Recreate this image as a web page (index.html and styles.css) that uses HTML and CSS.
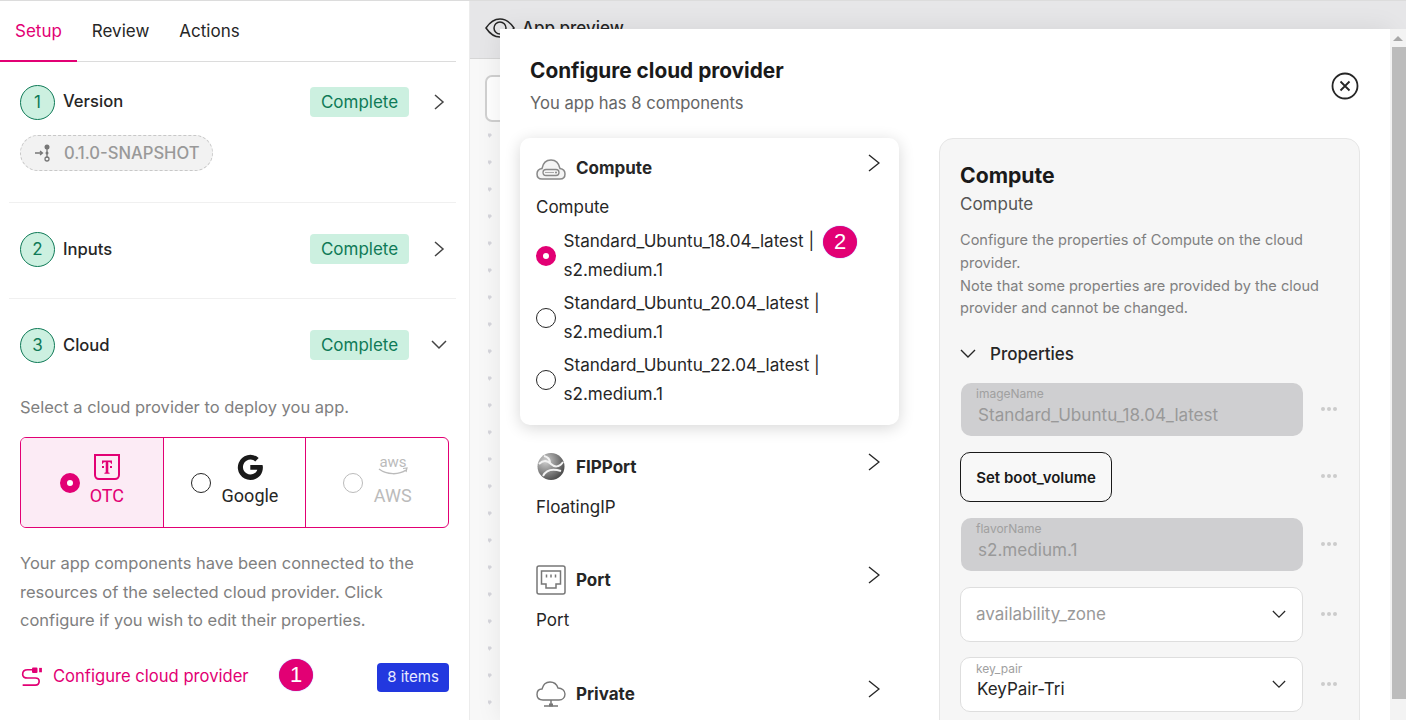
FILE: index.html
```html
<!DOCTYPE html>
<html>
<head>
    <title>Configure cloud provider</title>
    <link rel="stylesheet" href="styles.css">
</head>
<body>
    <div id="app">
        <div id="left-panel">
            <div class="tabs">
                <span class="tab active">Setup</span>
                <span class="tab">Review</span>
                <span class="tab">Actions</span>
            </div>

            <div class="step step-version">
                <div class="step-head">
                    <span class="step-num">1</span>
                    <span class="step-title">Version</span>
                    <span class="status">Complete</span>
                    <svg class="step-arrow" viewBox="0 0 12 16"><path d="M2 1l8 7-8 7"/></svg>
                </div>
                <div class="version-pill">
                    <svg viewBox="0 0 20 20"><path d="M1 10h7M6 8l2.500 2-2.500 2M13 5v10" class="thin"/><circle cx="13" cy="4" r="2.500" fill="#777"/><circle cx="13" cy="10" r="1.500" fill="#777"/><circle cx="13" cy="16" r="2" class="thin" fill="none"/></svg>
                    <span>0.1.0-SNAPSHOT</span>
                </div>
            </div>

            <div class="step step-inputs">
                <div class="step-head">
                    <span class="step-num">2</span>
                    <span class="step-title">Inputs</span>
                    <span class="status">Complete</span>
                    <svg class="step-arrow" viewBox="0 0 12 16"><path d="M2 1l8 7-8 7"/></svg>
                </div>
            </div>

            <div class="step step-cloud">
                <div class="step-head">
                    <span class="step-num">3</span>
                    <span class="step-title">Cloud</span>
                    <span class="status">Complete</span>
                    <svg class="step-arrow down" viewBox="0 0 16 12"><path d="M1 2l7 7 7-7"/></svg>
                </div>
                <p class="hint">Select a cloud provider to deploy you app.</p>
                <div class="providers">
                    <div class="provider selected">
                        <span class="radio on"></span>
                        <div class="provider-body">
                            <svg class="logo" viewBox="0 0 26 26"><path d="M1 1h24v20c0 2-1.500 4-4 4H5c-2.500 0-4-2-4-4z" fill="none" stroke="#e20074" stroke-width="2"/><path d="M8 6.500h10v3.300h-1c0-1-.7-1.800-2.700-1.800v9.800c0 .7.300 1 1.300 1v.9h-5.200v-.9c1 0 1.300-.3 1.300-1V8C9.700 8 9 8.800 9 9.800H8z" fill="#e20074"/><rect x="8" y="12" width="2" height="2" fill="#e20074"/><rect x="16" y="12" width="2" height="2" fill="#e20074"/></svg>
                            <span>OTC</span>
                        </div>
                    </div>
                    <div class="provider">
                        <span class="radio"></span>
                        <div class="provider-body">
                            <svg class="logo" viewBox="0 0 26 26"><path d="M25.500 11H13.300v4.700h7c-.9 3-3.600 4.700-7 4.700a7.400 7.400 0 1 1 4.900-13l3.500-3.500A12.600 12.600 0 1 0 13.300 26c7.300 0 12.600-5.200 12.600-12.700 0-.8-.1-1.500-.4-2.300z" fill="#1a1a1a"/></svg>
                            <span>Google</span>
                        </div>
                    </div>
                    <div class="provider disabled">
                        <span class="radio"></span>
                        <div class="provider-body">
                            <svg class="logo aws" viewBox="0 0 32 26"><text x="16" y="13" text-anchor="middle" class="aws-text">aws</text><path d="M2 15c8 6 20 6 27 1" fill="none" stroke="#bbb" stroke-width="1.500"/><path d="M26 14.500l4-.5-1 4" fill="none" stroke="#bbb" stroke-width="1.200"/></svg>
                            <span>AWS</span>
                        </div>
                    </div>
                </div>
                <p class="hint connected">Your app components have been connected to the resources of the selected cloud provider. Click configure if you wish to edit their properties.</p>
                <div class="configure-row">
                    <svg class="plug" viewBox="0 0 20 20"><path d="M11 2.500H6C3.500 2.500 1.500 3.700 1.500 6.500S3.500 10 6 10h7c2 0 3.500.7 3.500 3s-1.500 3.500-3.500 3.500H1.500"/><rect x="10" y="0.500" width="5" height="5" rx="1" class="fill"/><rect x="16.500" y="0.800" width="2.500" height="4" class="fill"/></svg>
                    <span class="configure-link">Configure cloud provider</span>
                    <span class="marker marker-one">1</span>
                    <span class="items-badge">8 items</span>
                </div>
            </div>
        </div>

        <div id="preview">
            <div class="preview-head">
                <svg viewBox="0 0 30 22"><path d="M1 11C5 5 9.500 2 15 2s10 3 14 9c-4 6-8.500 9-14 9S5 17 1 11z"/><circle cx="15" cy="11" r="6"/></svg>
                <span>App preview</span>
            </div>
            <div class="canvas">
                <div class="canvas-card"></div>
            </div>
        </div>
    </div>

    <div class="modal">
        <div class="modal-head">
            <div>
                <h1>Configure cloud provider</h1>
                <p>You app has 8 components</p>
            </div>
            <svg class="close" viewBox="0 0 28 28"><circle cx="14" cy="14" r="12.500"/><path d="M9.500 9.500l9 9M18.500 9.500l-9 9"/></svg>
        </div>
        <div class="modal-body">
            <div class="components">
                <div class="comp open">
                    <div class="comp-head">
                        <svg class="comp-icon" viewBox="0 0 30 30"><path d="M6 26h18c3 0 5-2 5-5s-2-5-5-5.500C23 11 20 7 15 7s-8 3-9 8.500C3 16 1 18 1 21s2 5 5 5z" fill="#f4f4f4" stroke="#888" stroke-width="1.500"/><rect x="7" y="16.500" width="16" height="6" rx="3" fill="none" stroke="#888" stroke-width="1.300"/><path d="M9 19.500h9" stroke="#aaa"/><circle cx="20" cy="19.500" r="1" fill="#888"/></svg>
                        <span class="comp-name">Compute</span>
                        <svg class="comp-arrow" viewBox="0 0 12 18"><path d="M1 1l10 8-10 8"/></svg>
                    </div>
                    <div class="comp-sub">Compute</div>
                    <div class="option">
                        <span class="radio on"></span>
                        <span class="option-text">Standard_Ubuntu_18.04_latest | s2.medium.1</span>
                        <span class="marker marker-two">2</span>
                    </div>
                    <div class="option">
                        <span class="radio"></span>
                        <span class="option-text">Standard_Ubuntu_20.04_latest | s2.medium.1</span>
                    </div>
                    <div class="option">
                        <span class="radio"></span>
                        <span class="option-text">Standard_Ubuntu_22.04_latest | s2.medium.1</span>
                    </div>
                </div>
                <div class="comp">
                    <div class="comp-head">
                        <svg class="comp-icon" viewBox="0 0 30 30"><defs><radialGradient id="globe" cx="0.300" cy="0.300" r="0.850"><stop offset="0" stop-color="#cfcfcf"/><stop offset="0.550" stop-color="#808080"/><stop offset="1" stop-color="#3c3c3c"/></radialGradient></defs><circle cx="15" cy="14.500" r="13.500" fill="url(#globe)"/><path d="M3 12c5-5 9-3 12 0s8 4 12-2M7 24c3-6 8-8 18-5M8 4c4 1 6 3 6 7" fill="none" stroke="#f2f2f2" stroke-width="2"/></svg>
                        <span class="comp-name">FIPPort</span>
                        <svg class="comp-arrow" viewBox="0 0 12 18"><path d="M1 1l10 8-10 8"/></svg>
                    </div>
                    <div class="comp-sub">FloatingIP</div>
                </div>
                <div class="comp comp-port">
                    <div class="comp-head">
                        <svg class="comp-icon" viewBox="0 0 30 30"><rect x="1" y="1" width="28" height="28" rx="2" fill="none" stroke="#777" stroke-width="1.500"/><path d="M5.500 6h19v13h-4.500v4h-10v-4H5.500z" fill="none" stroke="#777" stroke-width="1.500"/><path d="M10.500 9.500v3M15 9.500v3M19.500 9.500v3" stroke="#777" stroke-width="1.500"/></svg>
                        <span class="comp-name">Port</span>
                        <svg class="comp-arrow" viewBox="0 0 12 18"><path d="M1 1l10 8-10 8"/></svg>
                    </div>
                    <div class="comp-sub">Port</div>
                </div>
                <div class="comp">
                    <div class="comp-head">
                        <svg class="comp-icon" viewBox="0 0 30 30"><path d="M7 21c-3.500 0-6-2-6-5.500s2-5.500 5-5.500c1-4 4-7 8-7 4.500 0 7 3 8 6 4 0 7 2.500 7 6s-2.500 6-6 6z" fill="none" stroke="#777" stroke-width="1.400"/><path d="M15 21v6M8 27h14" stroke="#777" stroke-width="1.500"/><rect x="13" y="24.500" width="4" height="3" fill="#777"/></svg>
                        <span class="comp-name">Private</span>
                        <svg class="comp-arrow" viewBox="0 0 12 18"><path d="M1 1l10 8-10 8"/></svg>
                    </div>
                </div>
            </div>

            <div class="details">
                <h2>Compute</h2>
                <div class="details-sub">Compute</div>
                <p class="details-text">Configure the properties of Compute on the cloud provider.<br>Note that some properties are provided by the cloud provider and cannot be changed.</p>
                <div class="props-head">
                    <svg viewBox="0 0 16 12"><path d="M1 2l7 7 7-7"/></svg>
                    <span>Properties</span>
                </div>
                <div class="prop prop-first">
                    <div class="field locked"><label>imageName</label><span>Standard_Ubuntu_18.04_latest</span></div>
                    <span class="more"><i></i><i></i><i></i></span>
                </div>
                <div class="prop">
                    <button class="boot-button">Set boot_volume</button>
                    <span class="more"><i></i><i></i><i></i></span>
                </div>
                <div class="prop">
                    <div class="field locked"><label>flavorName</label><span>s2.medium.1</span></div>
                    <span class="more"><i></i><i></i><i></i></span>
                </div>
                <div class="prop">
                    <div class="field select empty">
                        <span>availability_zone</span>
                        <svg viewBox="0 0 16 12"><path d="M1 2l7 7 7-7"/></svg>
                    </div>
                    <span class="more"><i></i><i></i><i></i></span>
                </div>
                <div class="prop prop-last">
                    <div class="field select"><label>key_pair</label><span>KeyPair-Tri</span>
                        <svg viewBox="0 0 16 12"><path d="M1 2l7 7 7-7"/></svg>
                    </div>
                    <span class="more"><i></i><i></i><i></i></span>
                </div>
            </div>
        </div>
    </div>

    <div class="scrollbar"><span class="scroll-up"></span><span class="scroll-thumb"></span></div>
</body>
</html>
```

FILE: styles.css
```css
html, body {
    margin: 0;
    height: 720px;
    overflow: hidden;
}
body {
    font-family: Inter, "Noto Sans", sans-serif;
    font-size: 17px;
    color: #262626;
    background-color: #fff;
}
svg {
    display: block;
}
#app {
    display: flex;
    height: 720px;
    border-top: 1px solid #dcdcdc;
    box-sizing: border-box;
}

/* Left side */
#left-panel {
    width: 470px;
    flex-shrink: 0;
    box-sizing: border-box;
    padding-right: 13px;
    border-right: 1px solid #ececec;
}
.tabs {
    display: flex;
    height: 61px;
    box-sizing: border-box;
    border-bottom: 1px solid #dcdcdc;
}
.tab {
    padding: 20px 15px 0;
    font-size: 17px;
}
.tab.active {
    color: #e20074;
    box-shadow: 0 1px 0 #e20074;
    border-bottom: 1px solid #e20074;
    height: 39px;
}
.step {
    box-sizing: border-box;
    margin-left: 9px;
    padding: 28.500px 0 0 11px;
    border-bottom: 1px solid #f0f0f0;
}
.step-version {
    height: 141px;
    padding-top: 22.500px;
}
.step-inputs {
    height: 96px;
}
.step-cloud {
    border-bottom: none;
}
.step-head {
    display: flex;
    align-items: center;
    height: 35px;
}
.step-num {
    width: 33px;
    height: 33px;
    border: 1px solid #0f7a57;
    border-radius: 50%;
    background-color: #ccf0e0;
    color: #0f7a57;
    display: flex;
    align-items: center;
    justify-content: center;
    font-size: 17px;
}
.step-title {
    margin-left: 8px;
    font-size: 16.600px;
    font-weight: 500;
    flex: 1;
}
.step-version .step-title {
    padding-bottom: 2px;
}
.status {
    width: 99px;
    height: 30px;
    line-height: 30px;
    text-align: center;
    background-color: #ccf0e0;
    color: #0f7a57;
    border-radius: 4px;
}
.step-arrow {
    width: 12px;
    height: 16px;
    margin: 0 11px 0 24px;
    fill: none;
    stroke: #444;
    stroke-width: 1.500;
}
.step-arrow.down {
    width: 16px;
    height: 12px;
    margin: 0 9px 0 22px;
}
.version-pill {
    display: inline-flex;
    align-items: center;
    margin-top: 15px;
    height: 36px;
    width: 193px;
    box-sizing: border-box;
    padding-left: 13px;
    border: 1px dashed #c8c8c8;
    border-radius: 18px;
    background-color: #f2f2f2;
    color: #999;
    font-size: 16.600px;
    font-weight: 500;
}
.version-pill svg {
    width: 20px;
    height: 20px;
    margin-right: 10px;
}
.version-pill .thin {
    stroke: #777;
    stroke-width: 1.300;
    fill: none;
}
.hint {
    margin: 30px 0 0;
    color: #808080;
    font-size: 16.500px;
    line-height: 28.500px;
}
.hint.connected {
    margin-top: 21px;
}
.providers {
    display: flex;
    width: 429px;
    height: 91px;
    margin-top: 16px;
    box-sizing: border-box;
    border: 1px solid #e20074;
    border-radius: 6px;
    overflow: hidden;
}
.provider {
    flex: 1;
    display: flex;
    align-items: center;
    justify-content: center;
    gap: 11px;
    border-right: 1px solid #e20074;
    font-family: Roboto, sans-serif;
    font-size: 18px;
}
.provider:last-child {
    border-right: none;
}
.provider.selected {
    background-color: #fcebf5;
    color: #e20074;
    gap: 10px;
}
.provider.disabled {
    color: #bbb;
}
.provider.disabled .radio {
    border-color: #bbb;
}
.provider-body {
    display: flex;
    flex-direction: column;
    align-items: center;
    gap: 5px;
    padding-bottom: 5px;
}
.logo {
    width: 26px;
    height: 26px;
    overflow: visible;
}
.logo.aws {
    width: 32px;
}
.aws-text {
    font-size: 15px;
    fill: #bbb;
}
.radio {
    flex-shrink: 0;
    width: 20px;
    height: 20px;
    box-sizing: border-box;
    border: 1px solid #262626;
    border-radius: 50%;
    background-color: #fff;
}
.radio.on {
    border: 7px solid #e20074;
}
.configure-row {
    display: flex;
    align-items: center;
    margin-top: 25px;
    height: 36px;
    position: relative;
    width: 429px;
}
.plug {
    width: 22px;
    height: 22px;
    margin: 0 10px 0 1px;
    fill: none;
    stroke: #e20074;
    stroke-width: 1.500;
}
.plug .fill {
    fill: #e20074;
    stroke: none;
}
.configure-link {
    color: #e20074;
    font-size: 16.600px;
    padding-bottom: 4px;
    flex: 1;
}
.items-badge {
    width: 72px;
    height: 29px;
    line-height: 28px;
    text-align: center;
    font-size: 15px;
    background-color: #2238df;
    color: #e8ebff;
    border-radius: 4px;
}
.marker {
    position: absolute;
    width: 34px;
    height: 32px;
    border-radius: 50%;
    background-color: #e20074;
    color: #fff;
    font-family: "Liberation Sans", sans-serif;
    font-size: 22px;
    line-height: 32px;
    text-align: center;
    box-shadow: 0 0 1px #6a5cff;
}
.marker-one {
    left: 259px;
    top: -1px;
}
.marker-two {
    left: 287px;
    top: -1px;
}

/* Preview behind the modal */
#preview {
    flex: 1;
    background-color: #f8f8f8;
}
.preview-head {
    display: flex;
    align-items: center;
    gap: 7px;
    height: 58px;
    padding-left: 15px;
    box-sizing: border-box;
    padding-bottom: 4px;
    background-color: #e6e6e8;
    border-bottom: 1px solid #d6d6d6;
    font-weight: 500;
}
.preview-head svg {
    width: 30px;
    height: 22px;
    fill: none;
    stroke: #262626;
    stroke-width: 1.500;
}
.canvas {
    height: 661px;
    box-sizing: border-box;
    padding: 16px 0 0 15px;
    background-image: radial-gradient(#d6d6dc 2px, transparent 2px);
    background-size: 27px 27px;
    background-position: 6px 8.500px;
}
.canvas-card {
    width: 60px;
    height: 43px;
    background-color: #fff;
    border: 2.500px solid #d0d0d0;
    border-radius: 7px;
}

/* Modal */
.modal {
    position: absolute;
    left: 500px;
    top: 29px;
    width: 890px;
    height: 691px;
    box-sizing: border-box;
    padding: 26px 30px 0 20px;
    background-color: #fff;
    box-shadow: 0 0 24px rgba(0, 0, 0, 0.08);
    overflow: hidden;
}
.modal-head {
    display: flex;
    justify-content: space-between;
    padding-left: 10px;
}
.modal-head h1 {
    margin: 1px 0 0;
    font-size: 20.800px;
    line-height: 30px;
    font-weight: 700;
    color: #1a1a1a;
}
.modal-head p {
    margin: 3px 0 0;
    color: #666;
    font-size: 16.600px;
    line-height: 28px;
}
.close {
    width: 28px;
    height: 28px;
    margin: 17px 1px 0 0;
    fill: none;
    stroke: #262626;
    stroke-width: 1.800;
}
.modal-body {
    display: flex;
    margin-top: 21px;
}
.components {
    width: 379px;
    flex-shrink: 0;
}
.comp {
    padding: 15px 16px 0;
    height: 113px;
    box-sizing: border-box;
}
.comp.comp-port {
    height: 114px;
}
.comp.open {
    height: 287px;
    margin-bottom: 12px;
    background-color: #fff;
    border-radius: 10px;
    box-shadow: 0 3px 16px rgba(0, 0, 0, 0.16);
}
.comp-head {
    display: flex;
    align-items: center;
    height: 30px;
}
.comp-icon {
    width: 30px;
    height: 30px;
    margin-right: 10px;
}
.comp-name {
    flex: 1;
    font-weight: 700;
}
.comp-arrow {
    width: 12px;
    height: 18px;
    margin: -11px 3px 0 0;
    fill: none;
    stroke: #262626;
    stroke-width: 1.400;
}
.comp-sub {
    margin-top: 11px;
    line-height: 28px;
}
.comp.open .comp-sub {
    margin-top: 10px;
}
.option {
    display: flex;
    align-items: center;
    gap: 7.500px;
    position: relative;
    margin-top: 6px;
    line-height: 28.500px;
    font-size: 17.100px;
}
.option + .option {
    margin-top: 5px;
}
.option-text {
    width: 262px;
}

.details {
    flex: 1;
    height: 640px;
    margin-left: 40px;
    padding: 20px 20px 0;
    box-sizing: border-box;
    background-color: #f6f6f6;
    border: 1px solid #e6e6e6;
    border-radius: 14px;
}
.details h2 {
    margin: 0;
    font-size: 21.200px;
    line-height: 32px;
    color: #1a1a1a;
}
.details-sub {
    color: #555;
    line-height: 26px;
}
.details-text {
    margin: 12px 0 0;
    color: #808080;
    font-size: 14.550px;
    line-height: 22.800px;
}
.props-head {
    display: flex;
    align-items: center;
    gap: 14px;
    margin-top: 22px;
    height: 24px;
    font-weight: 500;
}
.props-head svg {
    width: 16px;
    height: 12px;
    fill: none;
    stroke: #262626;
    stroke-width: 1.400;
}
.prop {
    display: flex;
    align-items: center;
    justify-content: space-between;
    margin-top: 16px;
}
.prop-first {
    margin-top: 17px;
}
.prop-last {
    margin-top: 15px;
}
.field {
    position: relative;
    box-sizing: border-box;
    width: 343px;
    height: 53px;
    border-radius: 10px;
    padding-left: 17px;
    line-height: 24px;
}
.field label {
    position: absolute;
    left: 15px;
    top: 3px;
    font-size: 12px;
    line-height: 16px;
    color: #a0a0a0;
}
.field span {
    display: block;
    padding-top: 20px;
}
.field.locked {
    width: 342px;
    margin-left: 1px;
    background-color: #cfcfd1;
    color: #999;
    font-size: 17.100px;
}
.field.select {
    height: 55px;
    border: 1px solid #dedede;
    background-color: #fff;
    padding-left: 16px;
    color: #262626;
}
.field.select span {
    padding-top: 19px;
}
.field.empty {
    color: #999;
    padding-left: 15px;
}
.field.empty span {
    padding-top: 14px;
}
.field.select svg {
    position: absolute;
    right: 16px;
    top: 21px;
    width: 14px;
    height: 11px;
    fill: none;
    stroke: #262626;
    stroke-width: 1.400;
}
.boot-button {
    width: 152px;
    height: 50px;
    box-sizing: border-box;
    background-color: #f8f8f8;
    border: 1px solid #1a1a1a;
    border-radius: 10px;
    font-family: inherit;
    font-size: 15px;
    font-weight: 600;
    color: #1a1a1a;
}
.more {
    display: flex;
    gap: 2px;
    margin: 0 2px 2px 0;
}
.more i {
    width: 4px;
    height: 4px;
    border-radius: 50%;
    background-color: #ccc;
}

.scrollbar {
    position: absolute;
    left: 1390px;
    top: 29px;
    width: 16px;
    height: 691px;
    background-color: #f3f3f3;
}
.scroll-up {
    display: block;
    width: 0;
    margin: 7px 0 0 3px;
    border-left: 5px solid transparent;
    border-right: 5px solid transparent;
    border-bottom: 5px solid #a8a8a8;
}
.scroll-thumb {
    display: block;
    height: 652px;
    margin: 6px 0 0 2px;
    background-color: #bcbcbc;
}
```
